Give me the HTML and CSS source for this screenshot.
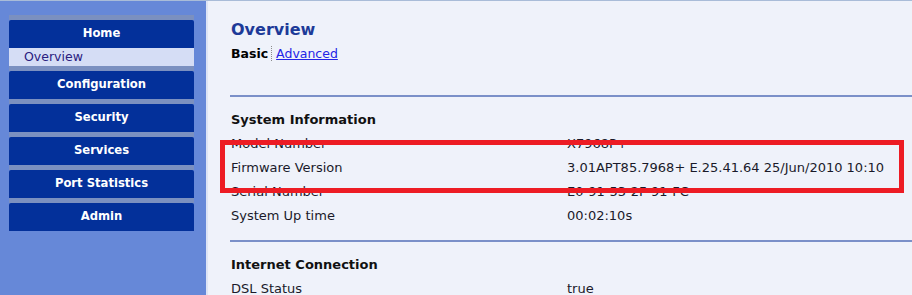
FILE: index.html
```html
<!DOCTYPE html>
<html>
<head>
<meta charset="utf-8">
<link rel="stylesheet" href="styles.css">
</head>
<body>
<div class="page">
  <nav class="sidebar">
    <ul class="menu">
      <li class="item"><a class="btn">Home</a>
        <a class="sub">Overview</a>
      </li>
      <li class="item"><a class="btn">Configuration</a></li>
      <li class="item"><a class="btn">Security</a></li>
      <li class="item"><a class="btn">Services</a></li>
      <li class="item"><a class="btn">Port Statistics</a></li>
      <li class="item"><a class="btn">Admin</a></li>
    </ul>
  </nav>
  <main class="content">
    <h1 class="title">Overview</h1>
    <div class="tabs"><span class="tab-active">Basic</span><a class="tab-link" href="#">Advanced</a></div>
    <hr class="rule first">
    <h2 class="section">System Information</h2>
    <div class="row"><span class="label">Model Number</span><span class="value">X7968P+</span></div>
    <div class="row"><span class="label">Firmware Version</span><span class="value">3.01APT85.7968+ E.25.41.64 25/Jun/2010 10:10</span></div>
    <div class="row"><span class="label">Serial Number</span><span class="value">E0-91-53-2F-91-FC</span></div>
    <div class="row"><span class="label">System Up time</span><span class="value">00:02:10s</span></div>
    <hr class="rule">
    <h2 class="section">Internet Connection</h2>
    <div class="row"><span class="label">DSL Status</span><span class="value">true</span></div>
  </main>
  <div class="highlight"></div>
</div>
</body>
</html>
```
FILE: styles.css
```css
html, body {
  margin: 0;
  padding: 0;
  height: 100%;
  overflow: hidden;
}
body {
  background: #eff2fa;
  font-family: "DejaVu Sans", Verdana, sans-serif;
  font-size: 13px;
}
.page {
  position: relative;
  display: flex;
  min-height: 100%;
  border-top: 1px solid #a9bcd8;
  box-sizing: border-box;
}
.sidebar {
  width: 206px;
  flex: none;
  background: #6688d8;
  border-right: 2px solid #dde4f5;
  padding-top: 14px;
}
.menu {
  list-style: none;
  margin: 0 0 0 9px;
  padding: 0;
  width: 185px;
}
.item {
  border-top: 5px solid #7b90c0;
}
.btn {
  display: block;
  height: 28px;
  line-height: 26px;
  background: #03309a;
  color: #ffffff;
  font-weight: bold;
  font-size: 11.6px;
  text-align: center;
  border-radius: 2px 2px 0 0;
}
.sub {
  display: block;
  height: 18px;
  line-height: 18px;
  background: #d5ddf5;
  color: #2a2080;
  font-size: 12.5px;
  padding-left: 15px;
}
.content {
  flex: 1;
  padding: 14px 0 0 23px;
}
.title {
  margin: 0;
  font-size: 16px;
  line-height: 29px;
  color: #1d3a98;
  font-weight: bold;
}
.tabs {
  line-height: 19px;
  font-size: 12.5px;
}
.tab-active {
  font-weight: bold;
  color: #000;
  padding-right: 3px;
}
.tab-link {
  color: #2424e6;
  text-decoration: underline;
  border-left: 1px dotted #8c8c8c;
  padding-left: 4px;
}
.rule {
  margin: 12px 0 11px -1px;
  border: 0;
  height: 2px;
  background: #7b90c8;
}
.rule.first {
  margin-top: 32px;
}
.section {
  margin: 0;
  font-size: 13px;
  font-weight: bold;
  line-height: 24px;
  color: #111;
}
.row {
  display: flex;
  line-height: 24px;
  color: #1a1a2a;
}
.label {
  width: 336px;
  flex: none;
}
.highlight {
  position: absolute;
  left: 220px;
  top: 139px;
  width: 684px;
  height: 53px;
  border: 5px solid #ed1c24;
  box-sizing: border-box;
}
```
